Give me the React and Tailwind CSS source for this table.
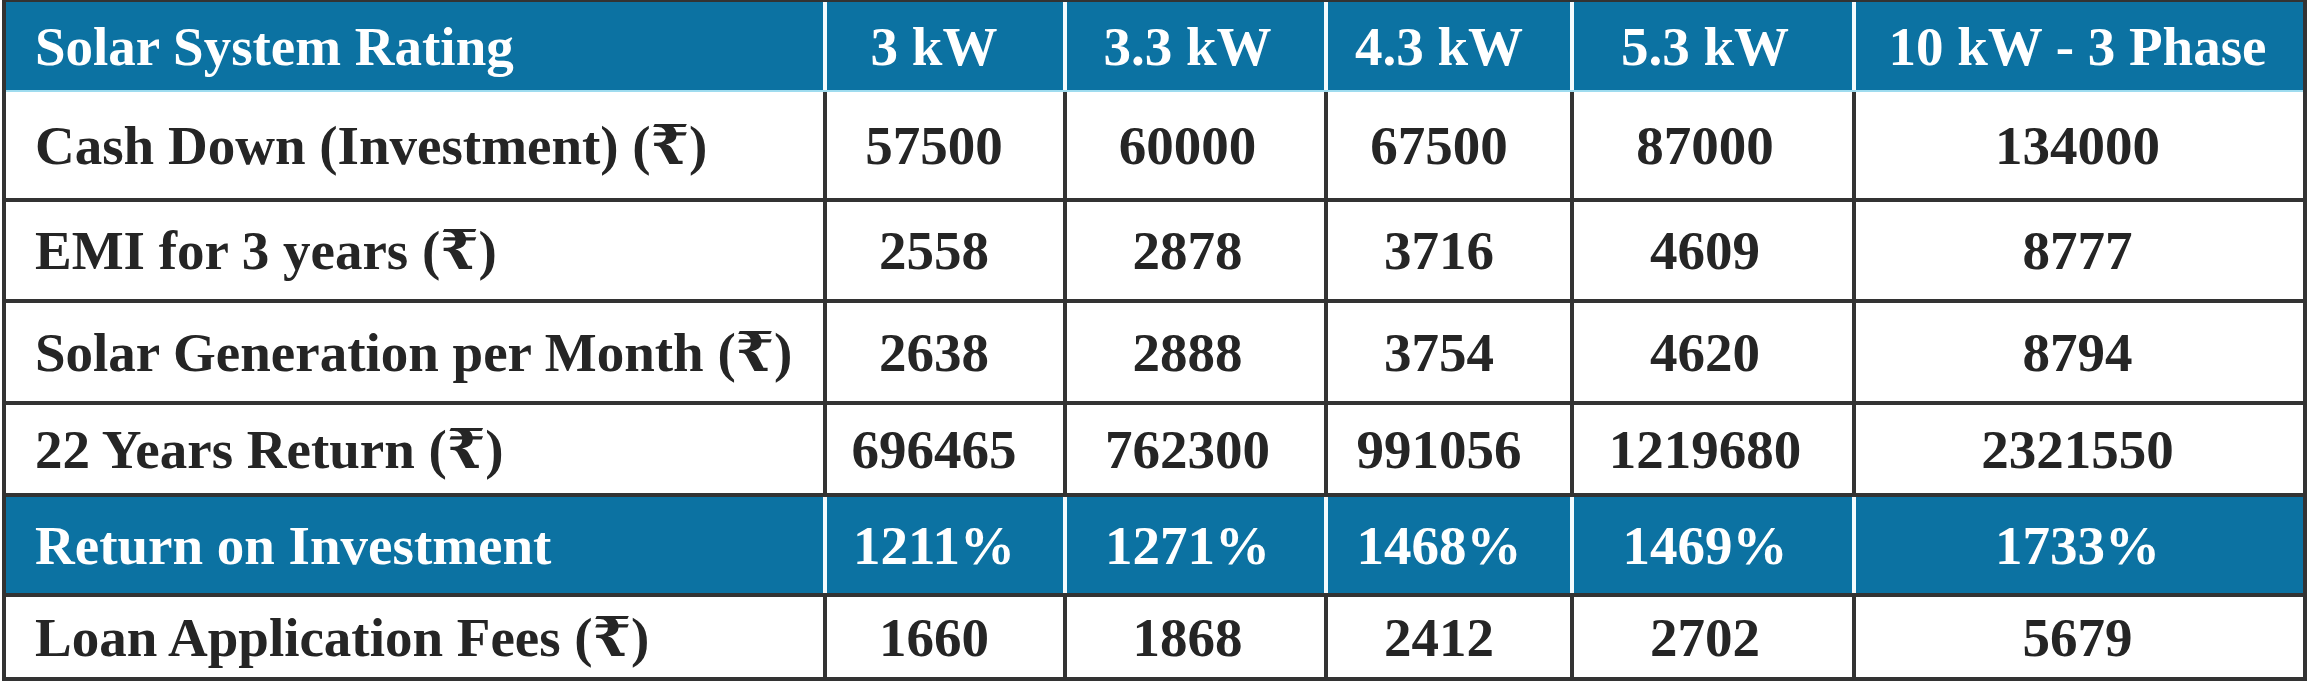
import React from 'react';

const widths = ['w-[817px]', 'w-[240px]', 'w-[261px]', 'w-[246px]', 'w-[282px]', 'flex-1'];
const pads = ['pl-[29px] justify-start', 'pr-[22px] justify-center', 'pr-4 justify-center', 'pr-5 justify-center', 'pr-4 justify-center', 'pr-1 justify-center'];

const rows = [
  { kind: 'head', h: 'h-[90px] border-b-2 border-[#9fdcef]', cells: ['Solar System Rating', '3 kW', '3.3 kW', '4.3 kW', '5.3 kW', '10 kW - 3 Phase'] },
  { kind: 'body', h: 'h-[106px]', cells: ['Cash Down (Investment) (₹)', '57500', '60000', '67500', '87000', '134000'] },
  { kind: 'body', h: 'h-[101px] border-t-4 border-[#333]', cells: ['EMI for 3 years (₹)', '2558', '2878', '3716', '4609', '8777'] },
  { kind: 'body', h: 'h-[102px] border-t-4 border-[#333]', cells: ['Solar Generation per Month (₹)', '2638', '2888', '3754', '4620', '8794'] },
  { kind: 'body', h: 'h-[92px] border-t-4 border-[#333]', cells: ['22 Years Return (₹)', '696465', '762300', '991056', '1219680', '2321550'] },
  { kind: 'head', h: 'h-[100px] border-t-4 border-[#333]', cells: ['Return on Investment', '1211%', '1271%', '1468%', '1469%', '1733%'] },
  { kind: 'body', h: 'h-[84px] border-t-4 border-[#333]', cells: ['Loan Application Fees (₹)', '1660', '1868', '2412', '2702', '5679'] },
];

const Row = ({ kind, h, cells }) => {
  const head = kind === 'head';
  return (
    <div className={`flex ${h} ${head ? 'bg-[#0c72a2] text-white' : 'bg-white text-[#252525]'}`}>
      {cells.map((text, i) => (
        <div
          key={i}
          className={`${widths[i]} ${pads[i]} flex items-center ${
            i === 0 ? '' : head ? 'border-l-4 border-[#f4fbfe]' : 'border-l-4 border-[#333]'
          }`}
        >
          {text}
        </div>
      ))}
    </div>
  );
};

export default function App() {
  return (
    <div className="w-[2310px] h-[683px] bg-white overflow-hidden">
      <div
        className="ml-[2px] w-[2305px] flex flex-col border-x-4 border-t-2 border-b-4 border-[#333] font-bold text-[55px] leading-none whitespace-nowrap"
        style={{ fontFamily: '"Liberation Serif", "DejaVu Serif", "Times New Roman", serif' }}
      >
        {rows.map((r, i) => (
          <Row key={i} {...r} />
        ))}
      </div>
    </div>
  );
}
